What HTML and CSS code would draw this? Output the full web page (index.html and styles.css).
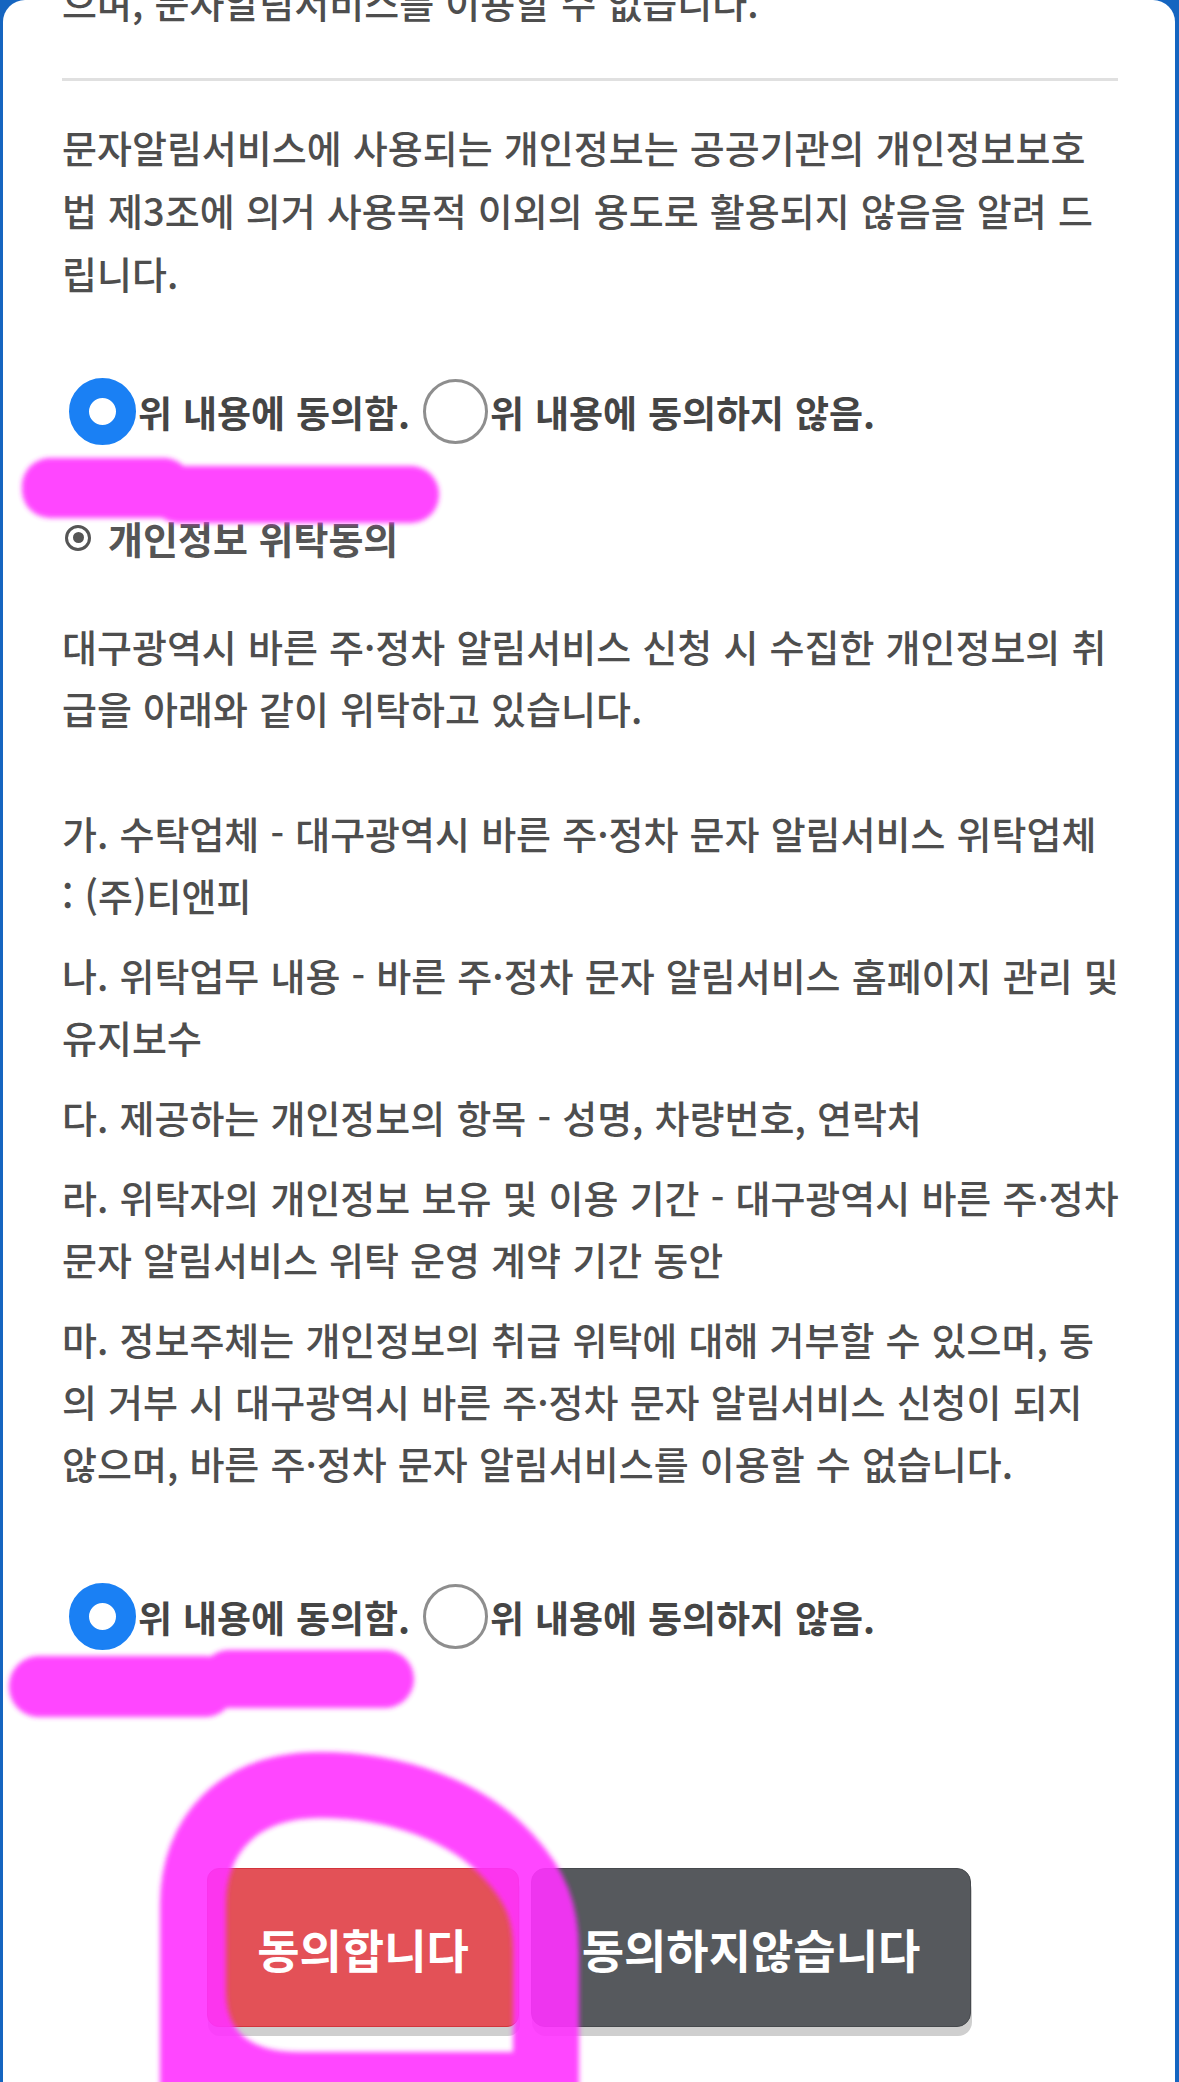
FILE: index.html
```html
<!DOCTYPE html>
<html lang="ko">
<head>
<meta charset="utf-8">
<title>개인정보 동의</title>
<link rel="stylesheet" href="styles.css">
</head>
<body>
<div class="screen">
  <div class="content">
    <p class="text clip-line">으며, 문자알림서비스를 이용할 수 없습니다.</p>
    <div class="divider"></div>

    <p class="text para1">문자알림서비스에 사용되는 개인정보는 공공기관의 개인정보보호<br>법 제3조에 의거 사용목적 이외의 용도로 활용되지 않음을 알려 드<br>립니다.</p>

    <div class="radio-row row1">
      <label class="radio-label"><input type="radio" name="agree1" class="radio" checked><span>위 내용에 동의함.</span></label>
      <label class="radio-label"><input type="radio" name="agree1" class="radio"><span>위 내용에 동의하지 않음.</span></label>
    </div>

    <h2 class="section-title"><span class="target-icon"></span>개인정보 위탁동의</h2>

    <p class="text intro">대구광역시 바른 주·정차 알림서비스 신청 시 수집한 개인정보의 취<br>급을 아래와 같이 위탁하고 있습니다.</p>

    <ul class="items">
      <li class="text item">가. 수탁업체 - 대구광역시 바른 주·정차 문자 알림서비스 위탁업체<br>: (주)티앤피</li>
      <li class="text item">나. 위탁업무 내용 - 바른 주·정차 문자 알림서비스 홈페이지 관리 및<br>유지보수</li>
      <li class="text item">다. 제공하는 개인정보의 항목 - 성명, 차량번호, 연락처</li>
      <li class="text item">라. 위탁자의 개인정보 보유 및 이용 기간 - 대구광역시 바른 주·정차<br>문자 알림서비스 위탁 운영 계약 기간 동안</li>
      <li class="text item">마. 정보주체는 개인정보의 취급 위탁에 대해 거부할 수 있으며, 동<br>의 거부 시 대구광역시 바른 주·정차 문자 알림서비스 신청이 되지<br>않으며, 바른 주·정차 문자 알림서비스를 이용할 수 없습니다.</li>
    </ul>

    <div class="radio-row row2">
      <label class="radio-label"><input type="radio" name="agree2" class="radio" checked><span>위 내용에 동의함.</span></label>
      <label class="radio-label"><input type="radio" name="agree2" class="radio"><span>위 내용에 동의하지 않음.</span></label>
    </div>

    <div class="actions">
      <button class="btn btn-agree" type="button">동의합니다</button>
      <button class="btn btn-disagree" type="button">동의하지않습니다</button>
    </div>
  </div>
</div>

<svg class="marker" width="1179" height="2082" viewBox="0 0 1179 2082" xmlns="http://www.w3.org/2000/svg">
  <defs>
    <filter id="soft" x="-10%" y="-10%" width="120%" height="120%">
      <feGaussianBlur stdDeviation="2.5"/>
    </filter>
  </defs>
  <g opacity="0.9" filter="url(#soft)" fill="#ff30ff">
    <rect x="22" y="458" width="170" height="60" rx="28"/>
    <rect x="150" y="466" width="289" height="57" rx="28"/>
    <rect x="9" y="1656" width="226" height="61" rx="30"/>
    <rect x="200" y="1650" width="214" height="58" rx="29"/>
    <path d="M193 2085 L193 1905 C193 1835 238 1785 320 1785 C398 1785 468 1812 508 1856 C536 1886 546 1912 546 1952 L546 2085 L300 2085 C230 2085 193 2050 193 1990 Z" fill="none" stroke="#ff30ff" stroke-width="66" stroke-linejoin="round"/>
  </g>
</svg>
</body>
</html>
```

FILE: styles.css
```css
html, body {
  margin: 0;
  padding: 0;
}

body {
  width: 1179px;
  height: 2082px;
  overflow: hidden;
  background: #1565c0;
  position: relative;
  font-family: "Noto Sans CJK KR", "Noto Sans", sans-serif;
}

.screen {
  margin: 0 4px 0 3px;
  height: 2082px;
  background: #ffffff;
  border-radius: 22px 22px 0 0;
  overflow: hidden;
}

.content {
  padding: 0 57px 0 59px;
}

.text {
  margin: 0;
  font-size: 38px;
  font-weight: 500;
  color: #4e4e4e;
  word-spacing: 0.5px;
  white-space: nowrap;
}

.clip-line {
  line-height: 63px;
  margin-top: -30px;
}

.divider {
  margin-top: 45px;
  height: 3px;
  background: #e0e0e0;
}

.para1 {
  margin-top: 34px;
  line-height: 63px;
}

.radio-row {
  display: flex;
  align-items: center;
  gap: 13px;
}

.row1 {
  margin-top: 74px;
}

.row2 {
  margin-top: 89px;
}

.radio-label {
  display: flex;
  align-items: center;
  font-size: 37px;
  font-weight: 700;
  color: #454545;
  word-spacing: 0.5px;
  white-space: nowrap;
}

.radio {
  appearance: none;
  -webkit-appearance: none;
  margin: 0 2px 0 7px;
  width: 67px;
  height: 67px;
  box-sizing: border-box;
  border-radius: 50%;
  border: 3px solid #8e8e8e;
  background: #ffffff;
  flex: none;
}

.radio:checked {
  border: 20px solid #1a80f4;
}

.radio-label + .radio-label .radio {
  margin-left: 0;
  width: 65px;
  height: 65px;
}

.section-title {
  margin: 61px 0 0 0;
  display: flex;
  align-items: center;
  font-size: 38px;
  font-weight: 700;
  color: #555555;
  line-height: 63px;
}

.target-icon {
  width: 26px;
  height: 26px;
  box-sizing: border-box;
  border: 3px solid #555555;
  border-radius: 50%;
  margin: 0 17px 0 3px;
  position: relative;
  flex: none;
}

.target-icon::after {
  content: "";
  position: absolute;
  left: 50%;
  top: 50%;
  width: 11px;
  height: 11px;
  margin: -5.5px 0 0 -5.5px;
  border-radius: 50%;
  background: #555555;
}

.intro {
  margin-top: 46px;
  line-height: 62px;
}

.items {
  list-style: none;
  margin: 63px 0 0 0;
  padding: 0;
  display: flex;
  flex-direction: column;
  gap: 18px;
}

.item {
  line-height: 62px;
}

.actions {
  margin-top: 218px;
  display: flex;
  justify-content: center;
  gap: 12px;
  padding-right: 2px;
}

.btn {
  height: 159px;
  font-family: "Noto Sans CJK KR", "Noto Sans", sans-serif;
  font-size: 46px;
  font-weight: 700;
  color: #ffffff;
  box-shadow: 1px 9px 0 #cfcfcf;
  padding: 0;
  cursor: pointer;
  white-space: nowrap;
}

.btn-agree {
  width: 312px;
  background: #e35157;
  border: 1.5px solid #d2353c;
  border-radius: 12px;
}

.btn-disagree {
  width: 440px;
  background: #56595d;
  border: 1.5px solid #46494d;
  border-radius: 14px;
}

.marker {
  position: absolute;
  left: 0;
  top: 0;
  pointer-events: none;
}
```
